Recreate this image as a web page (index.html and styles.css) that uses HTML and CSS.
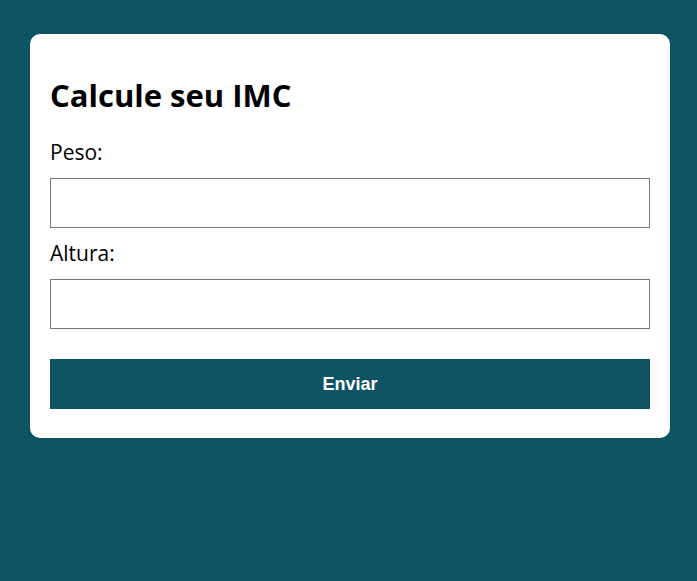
FILE: index.html
```html
<!DOCTYPE html>
<html lang="pt-BR">
<head>
<meta charset="utf-8">
<title>Calcule seu IMC</title>
<link rel="stylesheet" href="styles.css">
</head>
<body>
<main class="card">
  <h1 class="title">Calcule seu IMC</h1>
  <form class="form">
    <label class="label" for="peso">Peso:</label>
    <input class="field" id="peso" type="text">
    <label class="label" for="altura">Altura:</label>
    <input class="field" id="altura" type="text">
    <button class="submit" type="button">Enviar</button>
  </form>
</main>
</body>
</html>
```
FILE: styles.css
```css
html, body {
  margin: 0;
  padding: 0;
}
body {
  background: #0f5464;
  font-family: "Open Sans", sans-serif;
  padding: 34px 27px 0 30px;
  min-height: 581px;
  box-sizing: border-box;
}
.card {
  background: #fff;
  border-radius: 10px;
  padding: 20px 20px 29px;
  width: 640px;
  box-sizing: border-box;
}
.title {
  font-size: 31px;
  font-weight: 700;
  margin: 19.5px 0 21.5px;
  color: #000;
}
.form {
  display: flex;
  flex-direction: column;
}
.label {
  display: block;
  font-size: 21px;
  font-weight: 400;
  line-height: 27px;
  padding-top: 2px;
  color: #000;
}
.field {
  display: block;
  height: 50px;
  box-sizing: border-box;
  border: 1px solid #767676;
  border-radius: 0;
  margin: 12px 0 10px;
  padding: 0 10px;
  font-size: 16px;
}
.submit {
  margin-top: 20px;
  height: 50px;
  border: none;
  background: #0f5464;
  color: #fff;
  font-family: "Liberation Sans", Arial, sans-serif;
  font-weight: 700;
  font-size: 18px;
  padding: 0;
}
```
